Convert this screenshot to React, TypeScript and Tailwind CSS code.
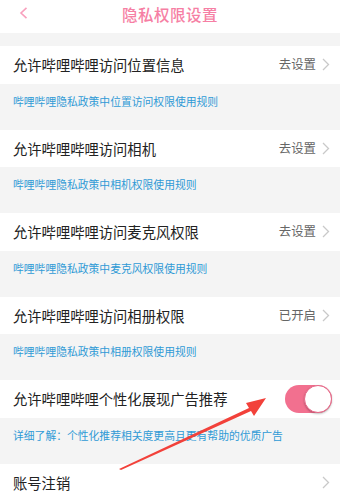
import React from 'react';

const font = { fontFamily: '"Noto Sans CJK SC", "Noto Sans", sans-serif' };

interface Item {
  label: string;
  value?: string;
  toggle?: boolean;
  desc: string;
}

const items: Item[] = [
  { label: '允许哔哩哔哩访问位置信息', value: '去设置', desc: '哔哩哔哩隐私政策中位置访问权限使用规则' },
  { label: '允许哔哩哔哩访问相机', value: '去设置', desc: '哔哩哔哩隐私政策中相机权限使用规则' },
  { label: '允许哔哩哔哩访问麦克风权限', value: '去设置', desc: '哔哩哔哩隐私政策中麦克风权限使用规则' },
  { label: '允许哔哩哔哩访问相册权限', value: '已开启', desc: '哔哩哔哩隐私政策中相册权限使用规则' },
  { label: '允许哔哩哔哩个性化展现广告推荐', toggle: true, desc: '详细了解：个性化推荐相关度更高且更有帮助的优质广告' },
];

const Chevron = ({ color = '#c9c9c9' }: { color?: string }) => (
  <svg width="8" height="13" viewBox="0 0 8 13" fill="none">
    <path d="M1 1l5.5 5.5L1 12" stroke={color} strokeWidth="1.3" />
  </svg>
);

const Toggle = () => (
  <div className="relative w-[47px] h-[28px] rounded-full bg-[#f2708f]">
    <div className="absolute right-0 top-0 w-[28px] h-[28px] rounded-full bg-white border-[1.5px] border-[#e86687] shadow-[0_1px_2px_rgba(0,0,0,0.25)]" />
  </div>
);

export default function App() {
  return (
    <div className="relative w-[340px] h-[501px] overflow-hidden bg-[#f4f4f4]" style={font}>
      {/* header */}
      <div className="relative h-[33px] bg-white flex items-center justify-center">
        <div className="absolute left-[19px] top-[7px]">
          <svg width="9" height="12" viewBox="0 0 9 12" fill="none">
            <path d="M7.5 0.8L2 6l5.5 5.2" stroke="#f8a0bd" strokeWidth="1.6" />
          </svg>
        </div>
        <span className="text-[15.5px] font-medium text-[#f67fa4] tracking-[0.5px] -mt-[4px]">隐私权限设置</span>
      </div>
      <div className="h-[13px]" />

      {items.map((it) => (
        <div key={it.label}>
          <div className="h-[37.5px] bg-white flex items-center pl-[13px] pr-[10px]">
            <span className="flex-1 text-[14.3px] text-[#222]">{it.label}</span>
            {it.toggle ? (
              <div className="mr-[-2px]"><Toggle /></div>
            ) : (
              <div className="flex items-center gap-[6px]">
                <span className="text-[12.4px] text-[#666]">{it.value}</span>
                <Chevron />
              </div>
            )}
          </div>
          <div className="h-[46px] pl-[13px] pt-[10px]">
            <span className="block text-[10.8px] leading-[14px] text-[#2f9ad6]">{it.desc}</span>
          </div>
        </div>
      ))}

      <div className="h-[38px] bg-white flex items-center pl-[13px] pr-[10px]">
        <span className="flex-1 text-[14.3px] text-[#222]">账号注销</span>
        <Chevron />
      </div>

      {/* red annotation arrow */}
      <svg className="absolute left-0 top-0 pointer-events-none" width="340" height="501" viewBox="0 0 340 501">
        <polygon
          points="119,469 249,408 246,403 266,398 254,416 251,411 121,470"
          fill="#f2413a"
        />
      </svg>
    </div>
  );
}
